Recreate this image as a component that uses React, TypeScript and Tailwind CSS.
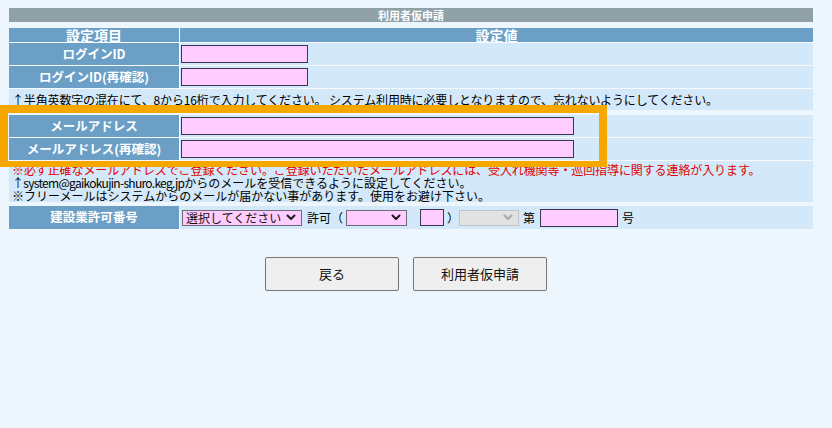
import React from "react";

const Chevron = ({ disabled = false }: { disabled?: boolean }) => (
  <svg width="10" height="7" viewBox="0 0 10 7" className="shrink-0">
    <path
      d="M1.5 1.5 L5 5 L8.5 1.5"
      fill="none"
      stroke={disabled ? "#a8a8a8" : "#1a1a1a"}
      strokeWidth="2"
      strokeLinecap="round"
      strokeLinejoin="round"
    />
  </svg>
);

function Select({ width, label, disabled }: { width: string; label?: string; disabled?: boolean }) {
  return (
    <div
      className={`${width} h-[16px] flex items-center justify-between pl-[3px] pr-[5px] border ${
        disabled ? "bg-[#e2e2e2] border-[#c4c4c4]" : "bg-[#ffccff] border-[#6f6a78]"
      }`}
    >
      <span className="text-[12px] leading-[14px] text-[#111] whitespace-nowrap">{label}</span>
      <Chevron disabled={disabled} />
    </div>
  );
}

function TextBox({ width }: { width: string }) {
  return <div className={`${width} h-[18px] bg-[#ffccff] border border-[#3a3450]`} />;
}

function Label({ children }: { children: React.ReactNode }) {
  return (
    <div className="bg-[#6b9fc6] flex items-center justify-center text-white font-bold text-[12.5px] leading-none whitespace-nowrap">
      {children}
    </div>
  );
}

export default function App() {
  return (
    <div className="relative min-h-screen w-[832px] bg-[#eef6fd] pt-[8px] font-['Noto_Sans_CJK_JP','Noto_Sans',sans-serif] text-black">
      <div className="ml-[9px] w-[804px]">
        {/* Title */}
        <div className="h-[14px] bg-[#8fa0a6] flex items-center justify-center text-white font-bold text-[11px] leading-none">
          利用者仮申請
        </div>

        {/* Login ID table */}
        <div className="mt-[6px] grid grid-cols-[170px_633px] gap-px bg-[#f6fafe]">
          <div className="h-[14px] bg-[#6b9fc6] overflow-hidden flex items-center justify-center text-white font-bold text-[14px] leading-[12px]">
            設定項目
          </div>
          <div className="h-[14px] bg-[#6b9fc6] overflow-hidden flex items-center justify-center text-white font-bold text-[14px] leading-[12px]">
            設定値
          </div>

          <Label>ログインID</Label>
          <div className="h-[22px] bg-[#d3e8f8] flex items-center pl-px">
            <TextBox width="w-[127px]" />
          </div>

          <Label>ログインID(再確認)</Label>
          <div className="h-[22px] bg-[#d3e8f8] flex items-center pl-px">
            <TextBox width="w-[127px]" />
          </div>

          <div className="col-span-2 h-[21px] bg-[#d3e8f8] flex items-center pl-[3px] text-[12px] leading-none tracking-[-0.15px] whitespace-nowrap">
            ↑半角英数字の混在にて、8から16桁で入力してください。 システム利用時に必要しとなりますので、忘れないようにしてください。
          </div>
        </div>

        {/* Mail address table */}
        <div className="mt-[5px] grid grid-cols-[170px_633px] gap-px bg-[#f6fafe]">
          <Label>メールアドレス</Label>
          <div className="h-[22px] bg-[#d3e8f8] flex items-center pl-px">
            <TextBox width="w-[393px]" />
          </div>

          <Label>メールアドレス(再確認)</Label>
          <div className="h-[22px] bg-[#d3e8f8] flex items-center pl-px">
            <TextBox width="w-[393px]" />
          </div>

          <div className="col-span-2 h-[41px] bg-[#d3e8f8] pl-[3px] pt-[2px] text-[12px] leading-[13px] whitespace-nowrap">
            <p className="text-[#e00000] tracking-[-0.1px]">
              ※必ず正確なメールアドレスでご登録ください。ご登録いただいたメールアドレスには、受入れ機関等・巡回指導に関する連絡が入ります。
            </p>
            <p>
              <span className="tracking-[-0.7px]">↑system@gaikokujin-shuro.keg.jp</span>
              からのメールを受信できるように設定してください。
            </p>
            <p>※フリーメールはシステムからのメールが届かない事があります。使用をお避け下さい。</p>
          </div>
        </div>

        {/* License number */}
        <div className="mt-[4px] grid grid-cols-[170px_633px] gap-px">
          <Label>建設業許可番号</Label>
          <div className="h-[23px] bg-[#d3e8f8] flex items-center pl-[2px] text-[12px] leading-none whitespace-nowrap">
            <Select width="w-[120px]" label="選択してください" />
            <span className="ml-[5px]">許可（</span>
            <Select width="w-[61px] ml-[3px]" />
            <div className="ml-[13px] w-[24px] h-[17px] bg-[#ffccff] border border-[#3a3450]" />
            <span className="ml-[3px] w-[12px]">）</span>
            <Select width="w-[60px]" disabled />
            <span className="ml-[4px]">第</span>
            <div className="ml-[5px]">
              <TextBox width="w-[78px]" />
            </div>
            <span className="ml-[4px]">号</span>
          </div>
        </div>

        {/* Buttons */}
        <div className="mt-[28px] flex justify-center gap-[14px] pr-[10px]">
          <button className="w-[134px] h-[34px] bg-[#efefef] border border-[#767676] rounded-[2px] text-[13px] text-[#111]">
            戻る
          </button>
          <button className="w-[134px] h-[34px] bg-[#efefef] border border-[#767676] rounded-[2px] text-[13px] text-[#111]">
            利用者仮申請
          </button>
        </div>
      </div>

      {/* Highlight frame */}
      <div className="absolute left-0 top-[105px] w-[607px] h-[62px] border-[8px] border-b-[6px] border-[#f6a800]" />
    </div>
  );
}
